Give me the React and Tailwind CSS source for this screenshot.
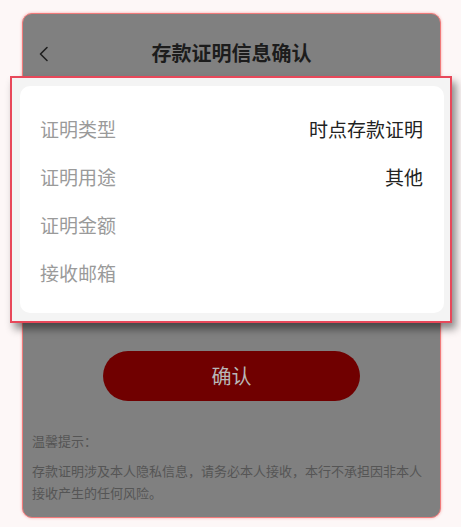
export default function App() {
  const rows = [
    { label: '证明类型', value: '时点存款证明' },
    { label: '证明用途', value: '其他' },
    { label: '证明金额', value: '' },
    { label: '接收邮箱', value: '' },
  ]

  return (
    <div
      className="h-[527px] w-[461px] overflow-hidden bg-[#fdf7f7] pt-[13px] pl-[22px]"
      style={{ fontFamily: '"Noto Sans CJK SC", "Noto Sans", sans-serif' }}
    >
      {/* phone screen, dimmed */}
      <div className="flex h-[505px] w-[419px] flex-col rounded-[10px] border border-[#f07a7a] bg-[#808080] shadow-[0_0_3px_#f6a5a5]">
        {/* header */}
        <div className="relative flex h-[62px] items-start justify-center pt-[27px]">
          <svg
            className="absolute left-[15px] top-[32px]"
            width="12"
            height="16"
            viewBox="0 0 12 16"
            fill="none"
            stroke="#1f1f1f"
            strokeWidth="1.6"
            strokeLinecap="round"
            strokeLinejoin="round"
          >
            <path d="M9 1.5 L2.5 8 L9 14.5" />
          </svg>
          <h1 className="text-[20px] font-bold leading-[24px] text-[#1c1c1c]">存款证明信息确认</h1>
        </div>

        {/* highlighted info card */}
        <div className="-ml-[13px] -mr-[12px] h-[247px] border-2 border-[#e8485a] bg-[#f4f4f4] py-[8px] pl-[8px] pr-[6px] shadow-[4px_6px_8px_rgba(0,0,0,0.45)]">
          <div className="h-full rounded-[10px] bg-white pt-[19px] pr-[21px] pl-[20px]">
            {rows.map(({ label, value }) => (
              <div key={label} className="flex h-[48px] items-center justify-between">
                <span className="text-[19px] text-[#9a9a9a]">{label}</span>
                <span className="text-[19px] text-[#222]">{value}</span>
              </div>
            ))}
          </div>
        </div>

        {/* confirm button */}
        <div className="mt-[28px] flex justify-center">
          <button className="h-[50px] w-[257px] rounded-full bg-[#700000] text-[20px] text-[#b8b8b8]">确认</button>
        </div>

        {/* tips */}
        <div className="mt-[29px] pl-[9px] pr-[14px] text-[13px] leading-[22px] text-[#555]">
          <p>温馨提示：</p>
          <p className="mt-[8px]">
            存款证明涉及本人隐私信息，请务必本人接收，本行不承担因非本人接收产生的任何风险。
          </p>
        </div>
      </div>
    </div>
  )
}
